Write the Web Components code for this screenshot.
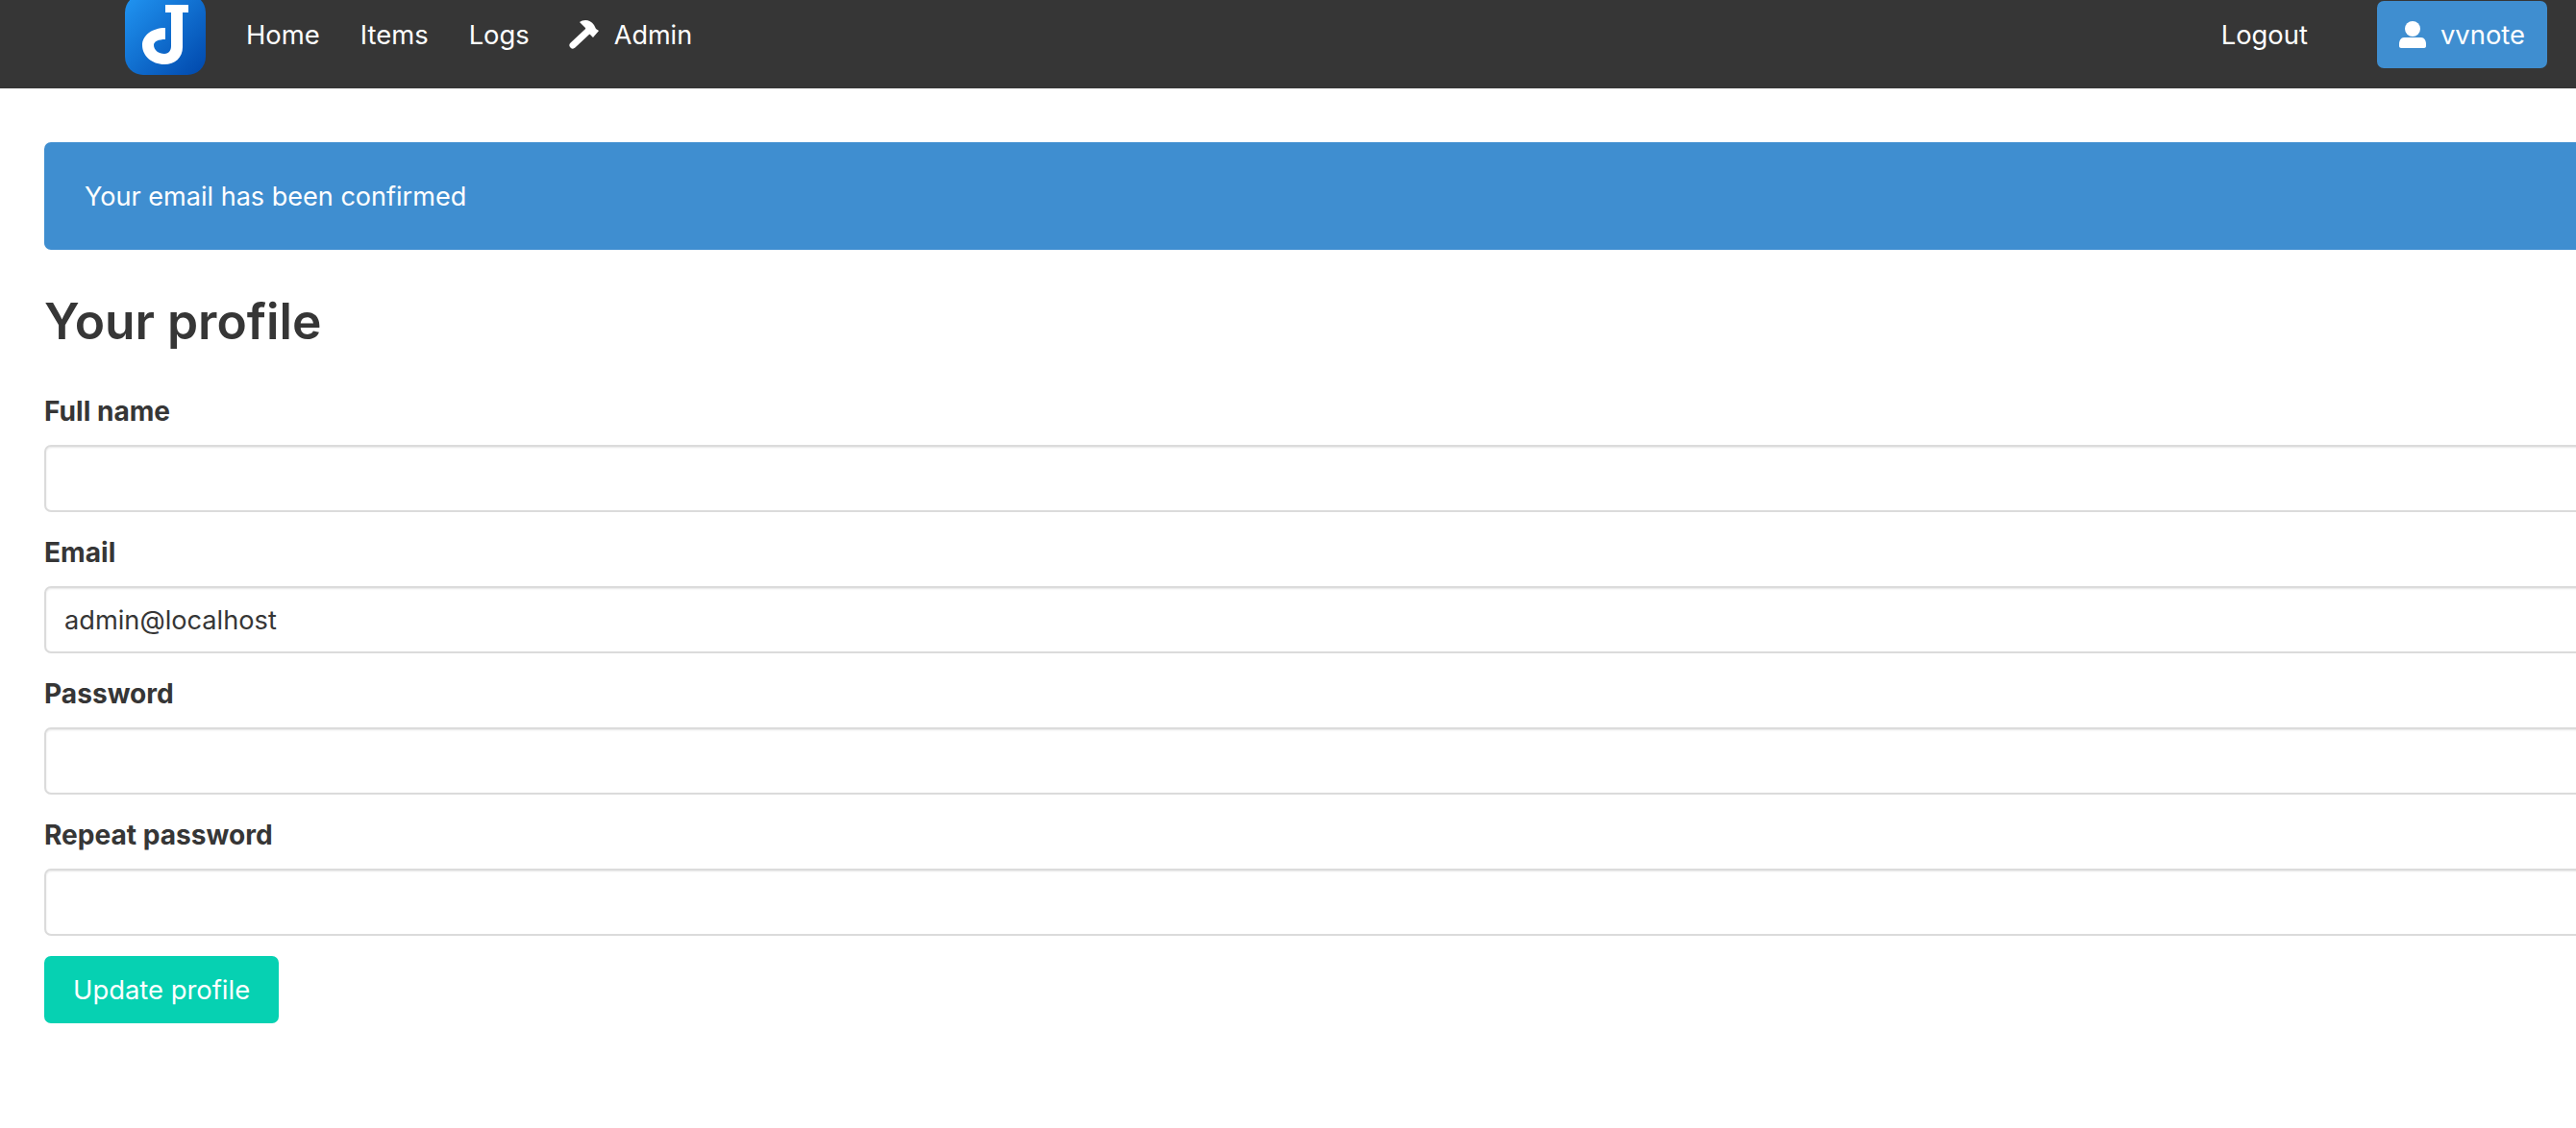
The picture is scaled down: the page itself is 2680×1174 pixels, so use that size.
<!DOCTYPE html>
<html>
<head>
<meta charset="utf-8">
<title>Your profile</title>
<style>
    html, body {
        margin: 0;
        height: 100%;
        overflow: hidden;
        background: #fff;
    }
    body {
        font-family: Inter, "Liberation Sans", sans-serif;
        font-size: 27.4px;
        font-weight: 380;
        color: #363636;
    }
</style>
</head>
<body>
<app-navbar></app-navbar>
<profile-page>
    <app-alert>Your email has been confirmed</app-alert>
    <h-title>Your profile</h-title>
    <form-field label="Full name"></form-field>
    <form-field label="Email">admin@localhost</form-field>
    <form-field label="Password"></form-field>
    <form-field label="Repeat password"></form-field>
    <app-button>Update profile</app-button>
</profile-page>

<script>
const navbarTemplate = document.createElement('template');
navbarTemplate.innerHTML = `
<style>
    :host {
        display: flex;
        align-items: center;
        box-sizing: border-box;
        height: 92px;
        padding: 0 30px 20px 130px;
        background: #363636;
        color: #fff;
    }
    .logo {
        display: block;
        width: 84px;
        height: 84px;
        flex: none;
        margin-right: 42px;
    }
    .links {
        display: flex;
        align-items: center;
        gap: 42px;
    }
    .admin {
        display: flex;
        align-items: center;
        gap: 16px;
        margin-left: -2px;
        font-size: 27px;
    }
    .admin svg {
        width: 32px;
        height: 32px;
    }
    .right {
        display: flex;
        align-items: center;
        gap: 72px;
        margin-left: auto;
    }
    .user {
        display: flex;
        align-items: center;
        gap: 15px;
        box-sizing: border-box;
        height: 70px;
        padding: 0 23px;
        background: #3f8ed0;
        border-radius: 7px;
    }
    .user svg {
        width: 28px;
        height: 28px;
        fill: #fff;
    }
</style>
<svg class="logo" viewBox="0 0 84 84">
    <defs>
        <linearGradient id="blue" x1="0" y1="0" x2="1" y2="1">
            <stop offset="0" stop-color="#2196f3"/>
            <stop offset="1" stop-color="#0047ab"/>
        </linearGradient>
    </defs>
    <rect width="84" height="84" rx="19" fill="url(#blue)"/>
    <path fill="#fff" d="M42 11H66V19H60V55C60 66 52 73 41 73C28 73 18 64 18 53C18 43 28 35 42 35V47C35 47 30 49 30 53C30 58 35 62 41 62C46 62 48 58 48 54V19H42Z"/>
</svg>
<div class="links">
    <span>Home</span>
    <span>Items</span>
    <span>Logs</span>
    <span class="admin">
        <svg viewBox="0 0 32 32">
            <path fill="none" stroke="#fff" stroke-width="7" stroke-linecap="round" d="M5 27L20 13"/>
            <path fill="#fff" d="M12 3C16 0 23 0 27 6L29 10L32 12L26 19L23 16L19 13L18 9Z"/>
        </svg>
        Admin
    </span>
</div>
<div class="right">
    <span>Logout</span>
    <span class="user">
        <svg viewBox="0 0 28 28">
            <circle cx="14" cy="8" r="8"/>
            <path d="M5 17H23C26 17 28 20 28 24V26C28 27 27 28 26 28H2C1 28 0 27 0 26V24C0 20 2 17 5 17Z"/>
        </svg>
        vvnote
    </span>
</div>
`;

class AppNavbar extends HTMLElement {

    constructor() {
        super();

        this.attachShadow({mode: 'open'});
        this.shadowRoot.appendChild(navbarTemplate.content.cloneNode(true));
    }

}

customElements.define('app-navbar', AppNavbar);


class ProfilePage extends HTMLElement {

    constructor() {
        super();

        this.attachShadow({mode: 'open'});
        this.shadowRoot.innerHTML = `
<style>
    :host {
        display: block;
        box-sizing: border-box;
        width: calc(100% + 60px);
        padding: 56px 0 0 46px;
    }
</style>
<slot></slot>
`;
    }

}

customElements.define('profile-page', ProfilePage);


class AppAlert extends HTMLElement {

    constructor() {
        super();

        this.attachShadow({mode: 'open'});
        this.shadowRoot.innerHTML = `
<style>
    :host {
        display: flex;
        align-items: center;
        box-sizing: border-box;
        height: 112px;
        padding: 0 42px;
        background: #3f8ed0;
        border-radius: 7px;
        color: #fff;
        font-size: 27.05px;
    }
</style>
<slot></slot>
`;
    }

}

customElements.define('app-alert', AppAlert);


class HTitle extends HTMLElement {

    constructor() {
        super();

        this.attachShadow({mode: 'open'});
        this.shadowRoot.innerHTML = `
<style>
    :host {
        display: block;
        margin: 43px 0 41px;
        font-size: 51.5px;
        font-weight: 600;
        line-height: 63px;
    }
</style>
<slot></slot>
`;
    }

}

customElements.define('h-title', HTitle);


class FormField extends HTMLElement {

    constructor() {
        super();

        this.attachShadow({mode: 'open'});
        this.shadowRoot.innerHTML = `
<style>
    :host {
        display: block;
        margin-bottom: 21px;
    }
    label {
        display: block;
        margin-bottom: 14px;
        font-size: 28.1px;
        font-weight: 680;
        line-height: 42px;
    }
    .input {
        display: flex;
        align-items: center;
        box-sizing: border-box;
        height: 70px;
        padding: 0 19px;
        background: #fff;
        border: 2px solid #dbdbdb;
        border-radius: 7px;
        box-shadow: inset 0 1px 2px rgba(10, 10, 10, 0.1);
        font-size: 27.2px;
    }
</style>
<label></label>
<div class="input" role="textbox"><slot></slot></div>
`;
    }

    connectedCallback() {
        this.shadowRoot.querySelector('label').textContent = this.getAttribute('label');
    }

}

customElements.define('form-field', FormField);


class AppButton extends HTMLElement {

    constructor() {
        super();

        this.attachShadow({mode: 'open'});
        this.shadowRoot.innerHTML = `
<style>
    :host {
        display: inline-flex;
        align-items: center;
        box-sizing: border-box;
        height: 70px;
        padding: 0 30px;
        background: #06d1b2;
        border-radius: 7px;
        color: #fff;
    }
</style>
<slot></slot>
`;
    }

}

customElements.define('app-button', AppButton);
</script>
</body>
</html>
